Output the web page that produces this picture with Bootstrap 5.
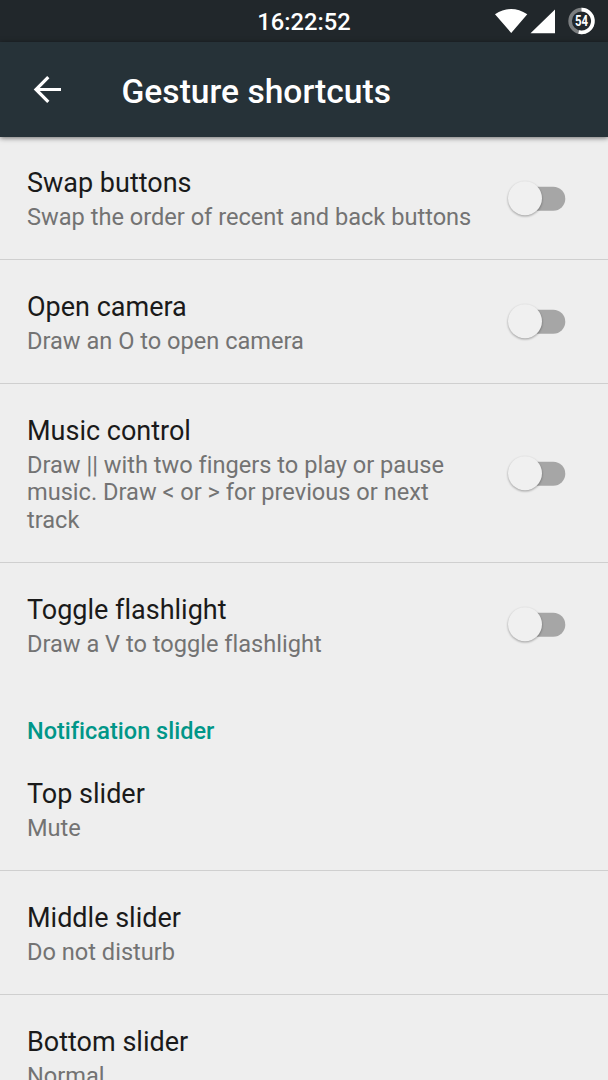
<!DOCTYPE html>
<html lang="en">
<head>
<meta charset="utf-8">
<meta name="viewport" content="width=device-width, initial-scale=1">
<title>Gesture shortcuts</title>
<link href="https://cdn.jsdelivr.net/npm/bootstrap@5.3.0/dist/css/bootstrap.min.css" rel="stylesheet">
<style>
html,body{height:100%;overflow:hidden}
body{font-family:Roboto,sans-serif;font-variant-ligatures:none;background:#eee;color:#1a1a1a}
.screen{height:1080px;overflow:hidden}
.status{height:42px;background:#21272b;display:grid;grid-template-columns:1fr auto 1fr;font-size:23.7px;font-weight:500;line-height:44px;color:#fff}
.appbar{height:95px;background:#263238;box-shadow:0 1px 5px rgba(0,0,0,.55);padding-left:33px;gap:59.5px;position:relative;z-index:1}
.appbar h1{font-size:33.6px;font-weight:500;line-height:40px;padding-top:4px}
.prefs{margin-top:-.7px}
.pref{height:123.75px;padding:29px 42px 27px 27px;border:0;border-bottom:1px solid #cfcfcf!important;border-radius:0!important;background:none;color:inherit}
.pref.tall{height:178.75px}
.pref.plain{border-bottom-color:transparent!important}
.name{font-size:27px;line-height:36px}
.desc{font-size:23.6px;line-height:27.5px;color:#737373;padding-top:3px;max-width:450px}
.section{height:61px;font-size:23.5px;font-weight:500;line-height:28px;color:#009688;padding:30.5px 27px 0}
.knob{filter:drop-shadow(0 1.5px 1px rgba(0,0,0,.35))}
</style>
</head>
<body>
<main class="screen d-flex flex-column">
<header class="status flex-shrink-0"><span></span><span>16:22:52</span>
<svg class="ms-auto" width="116" height="42" viewBox="492 0 116 42">
<path d="M495 14.2Q511 3.8 527.3 14.2L511.2 33ZM555 9.5V33.3H530.5Z" fill="#fff"/>
<circle cx="581.5" cy="21" r="11.4" fill="none" stroke="#7b7e80" stroke-width="3.6"/>
<path d="M581.5 9.6A11.4 11.4 0 1 1 578.7 32.05" fill="none" stroke="#fff" stroke-width="3.6"/>
<text x="581.5" y="26" text-anchor="middle" font-size="14" font-weight="700" fill="#fff" textLength="13" lengthAdjust="spacingAndGlyphs">54</text>
</svg></header>
<nav class="appbar d-flex align-items-center flex-shrink-0">
<svg class="flex-shrink-0" width="29" height="29" viewBox="0 0 29 29" fill="none" stroke="#fff" stroke-width="3.2"><path d="M28 14.5H3M15.3 2.2L3 14.5L15.3 26.8"/></svg>
<h1 class="m-0 text-white">Gesture shortcuts</h1></nav>
<svg class="d-none"><symbol id="toggle" viewBox="0 0 62 44"><rect x="16" y="9.7" width="43.3" height="24" rx="12" fill="#a6a6a6"/><circle class="knob" cx="19" cy="21.2" r="17" fill="#f0f0f0"/></symbol></svg>
<div class="list-group list-group-flush flex-shrink-0 prefs">
<div class="list-group-item pref d-flex justify-content-between align-items-center"><div><div class="name">Swap buttons</div><div class="desc">Swap the order of recent and back buttons</div></div><svg class="flex-shrink-0" width="60" height="44" viewBox="0 0 60 44"><use href="#toggle" width="62" height="44"/></svg></div>
<div class="list-group-item pref d-flex justify-content-between align-items-center"><div><div class="name">Open camera</div><div class="desc">Draw an O to open camera</div></div><svg class="flex-shrink-0" width="60" height="44" viewBox="0 0 60 44"><use href="#toggle" width="62" height="44"/></svg></div>
<div class="list-group-item pref tall d-flex justify-content-between align-items-center"><div><div class="name">Music control</div><div class="desc">Draw || with two fingers to play or pause music. Draw &lt; or &gt; for previous or next track</div></div><svg class="flex-shrink-0" width="60" height="44" viewBox="0 0 60 44"><use href="#toggle" width="62" height="44"/></svg></div>
<div class="list-group-item pref plain d-flex justify-content-between align-items-center"><div><div class="name">Toggle flashlight</div><div class="desc">Draw a V to toggle flashlight</div></div><svg class="flex-shrink-0" width="60" height="44" viewBox="0 0 60 44"><use href="#toggle" width="62" height="44"/></svg></div>
</div>
<h2 class="section m-0 flex-shrink-0">Notification slider</h2>
<div class="list-group list-group-flush flex-shrink-0">
<div class="list-group-item pref"><div class="name">Top slider</div><div class="desc">Mute</div></div>
<div class="list-group-item pref"><div class="name">Middle slider</div><div class="desc">Do not disturb</div></div>
<div class="list-group-item pref plain"><div class="name">Bottom slider</div><div class="desc">Normal</div></div>
</div>
</main>
<script src="https://cdn.jsdelivr.net/npm/bootstrap@5.3.0/dist/js/bootstrap.bundle.min.js"></script>
</body>
</html>
